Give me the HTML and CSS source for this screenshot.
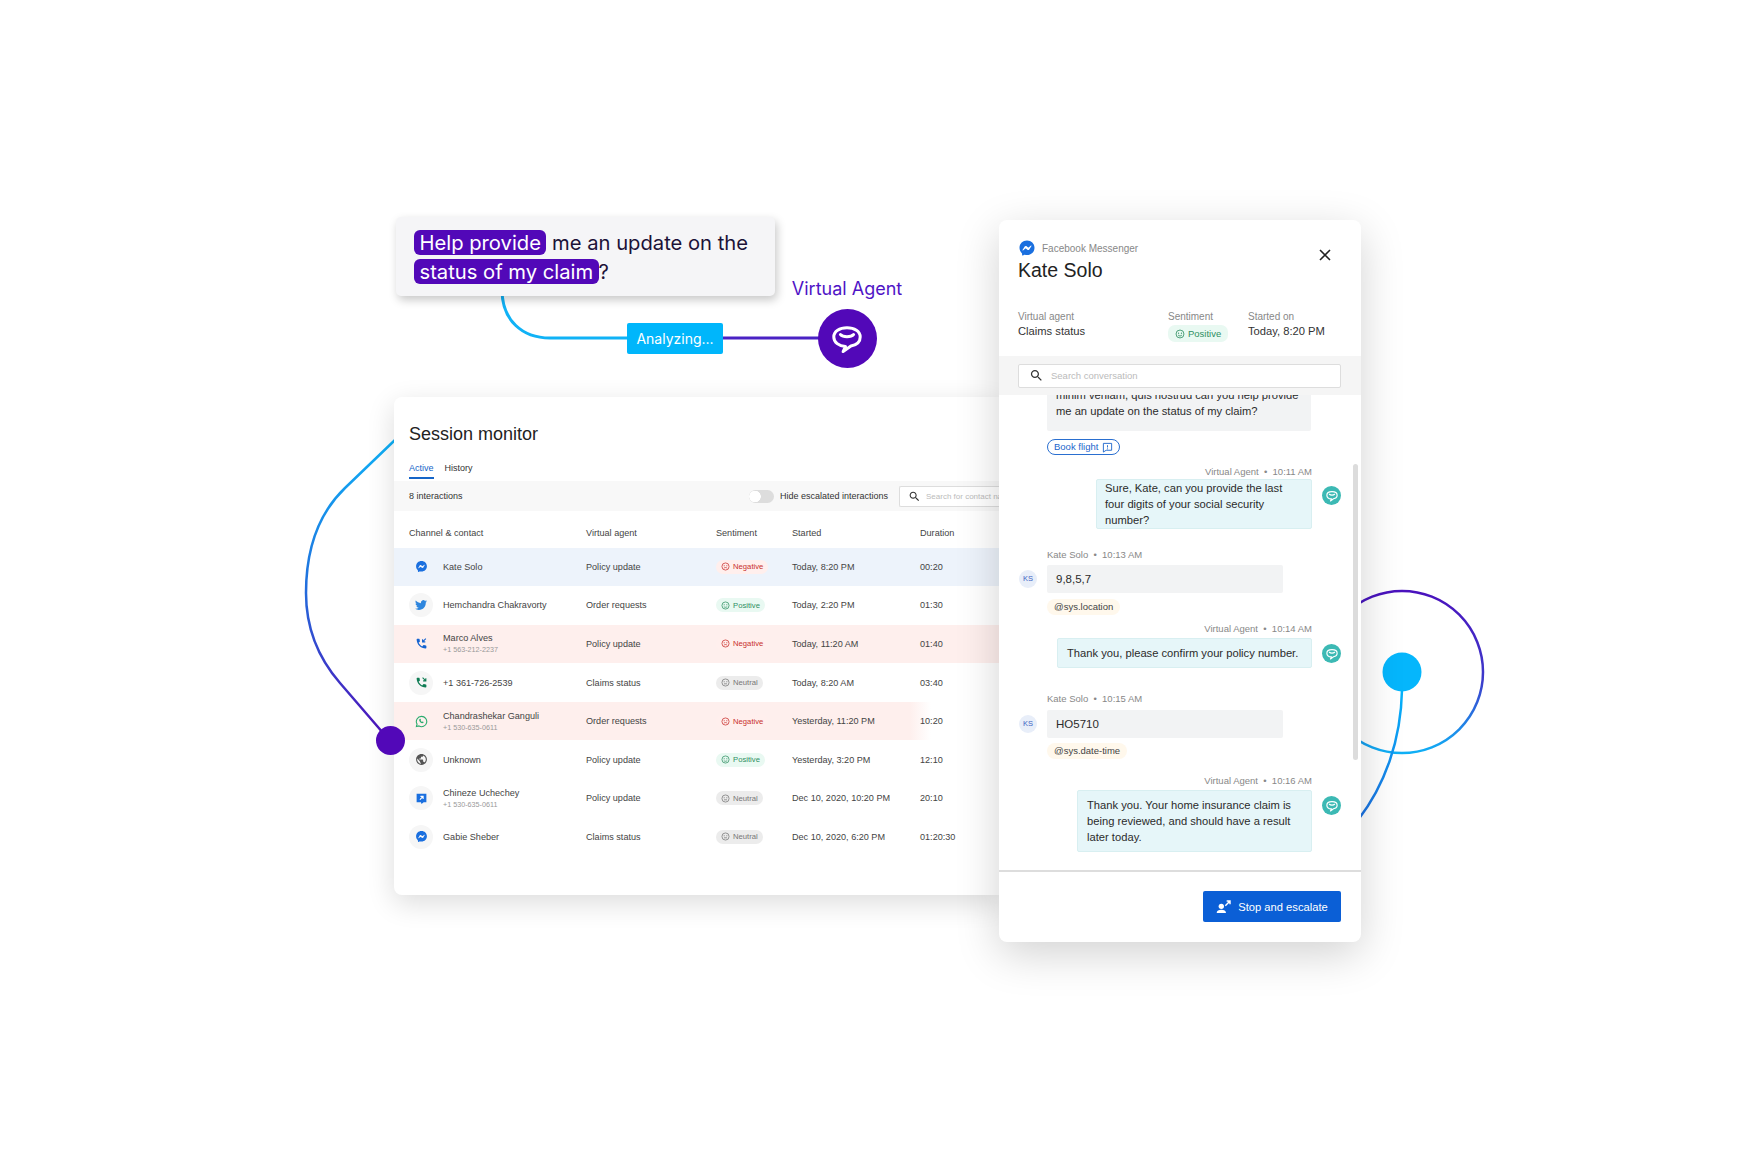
FILE: index.html
```html
<!DOCTYPE html>
<html>
  <head>
    <meta charset="utf-8">
    <title>Session monitor</title>
    <link rel="stylesheet" href="styles.css">
  </head>
  <body>
    <svg class="defs">
      <symbol id="bot" viewBox="0 0 24 24">
        <path d="M12 4.5C7 4.5 3.2 6.8 3.2 10.6c0 3.6 3.4 6.2 7.8 6.4l-1.6 3.4 5.2-3.7c3.9-.8 6.2-3.2 6.2-6.1 0-3.8-3.8-6.1-8.8-6.1z" fill="none" stroke="currentColor" stroke-width="2" stroke-linejoin="round"/>
        <path d="M7.6 9c1.7 1.9 7.1 1.9 8.8 0" fill="none" stroke="currentColor" stroke-width="2" stroke-linecap="round"/>
      </symbol>
      <symbol id="messenger" viewBox="0 0 24 24">
        <path fill="currentColor" d="M12 2C6.36 2 2 6.13 2 11.7c0 2.91 1.19 5.44 3.14 7.17.16.15.26.35.27.57l.05 1.78c.02.57.61.94 1.13.71l1.98-.87c.17-.08.36-.09.54-.05.91.25 1.87.38 2.89.38 5.64 0 10-4.13 10-9.7S17.64 2 12 2zm6 7.46-2.94 4.66c-.47.74-1.47.93-2.17.4l-2.34-1.75a.6.6 0 0 0-.72 0l-3.16 2.4c-.42.32-.97-.18-.69-.63l2.94-4.66c.47-.74 1.47-.93 2.17-.4l2.34 1.75c.22.16.51.16.72 0l3.16-2.4c.42-.32.97.18.69.63z"/>
      </symbol>
      <symbol id="twitter" viewBox="0 0 24 24">
        <path fill="currentColor" d="M23.953 4.57a10 10 0 01-2.825.775 4.958 4.958 0 002.163-2.723c-.951.555-2.005.959-3.127 1.184a4.92 4.92 0 00-8.384 4.482C7.69 8.095 4.067 6.13 1.64 3.162a4.822 4.822 0 00-.666 2.475c0 1.71.87 3.213 2.188 4.096a4.904 4.904 0 01-2.228-.616v.06a4.923 4.923 0 003.946 4.827 4.996 4.996 0 01-2.212.085 4.936 4.936 0 004.604 3.417 9.867 9.867 0 01-6.102 2.105c-.39 0-.779-.023-1.17-.067a13.995 13.995 0 007.557 2.209c9.053 0 13.998-7.496 13.998-13.985 0-.21 0-.42-.015-.63A9.935 9.935 0 0024 4.59z"/>
      </symbol>
      <symbol id="phone" viewBox="0 0 24 24">
        <path fill="currentColor" d="M20 15.5c-1.25 0-2.45-.2-3.57-.57-.35-.11-.74-.03-1.02.24l-2.2 2.2c-2.83-1.44-5.15-3.75-6.59-6.59l2.2-2.21c.28-.26.36-.65.25-1C8.7 6.45 8.5 5.25 8.5 4c0-.55-.45-1-1-1H4c-.55 0-1 .45-1 1 0 9.39 7.61 17 17 17 .55 0 1-.45 1-1v-3.5c0-.55-.45-1-1-1z"/>
      </symbol>
      <symbol id="search" viewBox="0 0 24 24">
        <path fill="currentColor" d="M15.5 14h-.79l-.28-.27C15.41 12.59 16 11.11 16 9.5 16 5.91 13.09 3 9.5 3S3 5.91 3 9.5 5.91 16 9.5 16c1.61 0 3.09-.59 4.23-1.57l.27.28v.79l5 4.99L20.49 19l-4.99-5zm-6 0C7.01 14 5 11.99 5 9.5S7.01 5 9.5 5 14 7.01 14 9.5 11.99 14 9.5 14z"/>
      </symbol>
      <symbol id="happy" viewBox="0 0 24 24">
        <circle cx="12" cy="12" r="9.5" fill="none" stroke="currentColor" stroke-width="2"/>
        <circle cx="8.5" cy="10" r="1.5" fill="currentColor"/>
        <circle cx="15.5" cy="10" r="1.5" fill="currentColor"/>
        <path d="M7.5 14.5c2 3 7 3 9 0" fill="none" stroke="currentColor" stroke-width="2"/>
      </symbol>
      <symbol id="sad" viewBox="0 0 24 24">
        <circle cx="12" cy="12" r="9.5" fill="none" stroke="currentColor" stroke-width="2"/>
        <circle cx="8.5" cy="10" r="1.5" fill="currentColor"/>
        <circle cx="15.5" cy="10" r="1.5" fill="currentColor"/>
        <path d="M7.5 17c2-3 7-3 9 0" fill="none" stroke="currentColor" stroke-width="2"/>
      </symbol>
      <symbol id="flat" viewBox="0 0 24 24">
        <circle cx="12" cy="12" r="9.5" fill="none" stroke="currentColor" stroke-width="2"/>
        <circle cx="8.5" cy="10" r="1.5" fill="currentColor"/>
        <circle cx="15.5" cy="10" r="1.5" fill="currentColor"/>
        <path d="M8 15.5h8" fill="none" stroke="currentColor" stroke-width="2"/>
      </symbol>
    </svg>

    <div class="stage">
      <svg class="wires" width="1740" height="1160" viewBox="0 0 1740 1160">
        <defs>
          <linearGradient id="leftwire" gradientUnits="userSpaceOnUse" x1="0" y1="441" x2="0" y2="741">
            <stop offset="0" stop-color="#0fb0f6"/>
            <stop offset=".45" stop-color="#1f74df"/>
            <stop offset="1" stop-color="#4f0db8"/>
          </linearGradient>
          <linearGradient id="ring" gradientUnits="userSpaceOnUse" x1="0" y1="591" x2="0" y2="753">
            <stop offset="0" stop-color="#4a12bd"/>
            <stop offset=".55" stop-color="#3d3acb"/>
            <stop offset="1" stop-color="#0fb0f6"/>
          </linearGradient>
          <linearGradient id="drop" gradientUnits="userSpaceOnUse" x1="0" y1="690" x2="0" y2="816">
            <stop offset="0" stop-color="#05b4fb"/>
            <stop offset="1" stop-color="#1c72e2"/>
          </linearGradient>
        </defs>
        <path d="M502 290C502 320 522 338 550 338H640" fill="none" stroke="#10b2f6" stroke-width="3"/>
        <path d="M720 338H830" fill="none" stroke="#4a22c4" stroke-width="3"/>
        <path d="M396 439L345 488C318 514 306 550 306 593C306 630 320 660 340 683L390 741" fill="none" stroke="url(#leftwire)" stroke-width="2.5"/>
        <circle cx="1402" cy="672" r="81" fill="none" stroke="url(#ring)" stroke-width="2.5"/>
        <path d="M1402 690C1401 740 1385 785 1358 820" fill="none" stroke="url(#drop)" stroke-width="2.5"/>
        <circle cx="1402" cy="672" r="19.5" fill="#05b6fc"/>
      </svg>

      <div class="utterance">
        <span class="hl">Help provide</span> me an update on the<br>
        <span class="hl">status of my claim</span>?
      </div>
      <div class="analyzing">Analyzing...</div>
      <div class="agent">
        <div class="agent-name">Virtual Agent</div>
        <div class="agent-dot"><svg width="36" height="36"><use href="#bot"/></svg></div>
      </div>

      <div class="monitor">
        <h1>Session monitor</h1>
        <div class="tabs">
          <div class="tab active">Active</div>
          <div class="tab">History</div>
        </div>
        <div class="toolbar">
          <span>8 interactions</span>
          <span class="toggle"></span>
          <span>Hide escalated interactions</span>
          <div class="mini-search">
            <svg width="13" height="13"><use href="#search"/></svg>
            <span>Search for contact name</span>
          </div>
        </div>
        <div class="row head">
          <div>Channel &amp; contact</div><div>Virtual agent</div><div>Sentiment</div><div>Started</div><div>Duration</div>
        </div>
        <div class="row blue">
          <div class="contact"><span class="ch"><svg class="c-fb" width="13" height="13"><use href="#messenger"/></svg></span><div>Kate Solo</div></div>
          <div>Policy update</div>
          <div><span class="pill neg"><svg width="9" height="9"><use href="#sad"/></svg>Negative</span></div>
          <div>Today, 8:20 PM</div><div>00:20</div>
        </div>
        <div class="row">
          <div class="contact"><span class="ch"><svg class="c-tw" width="12" height="12"><use href="#twitter"/></svg></span><div>Hemchandra Chakravorty</div></div>
          <div>Order requests</div>
          <div><span class="pill pos"><svg width="9" height="9"><use href="#happy"/></svg>Positive</span></div>
          <div>Today, 2:20 PM</div><div>01:30</div>
        </div>
        <div class="row pink">
          <div class="contact"><span class="ch"><svg class="c-blue" width="13" height="13" viewBox="0 0 24 24"><use href="#phone"/><path d="M20 3l-6 6M14 4v5h5" fill="none" stroke="currentColor" stroke-width="2"/></svg></span><div>Marco Alves<small>+1 563-212-2237</small></div></div>
          <div>Policy update</div>
          <div><span class="pill neg"><svg width="9" height="9"><use href="#sad"/></svg>Negative</span></div>
          <div>Today, 11:20 AM</div><div>01:40</div>
        </div>
        <div class="row">
          <div class="contact"><span class="ch"><svg class="c-green" width="13" height="13" viewBox="0 0 24 24"><use href="#phone"/><path d="M14 3l6 6M20 4v5h-5" fill="none" stroke="currentColor" stroke-width="2"/></svg></span><div>+1 361-726-2539</div></div>
          <div>Claims status</div>
          <div><span class="pill neu"><svg width="9" height="9"><use href="#flat"/></svg>Neutral</span></div>
          <div>Today, 8:20 AM</div><div>03:40</div>
        </div>
        <div class="row pink-short">
          <div class="contact"><span class="ch"><svg class="c-wa" width="13" height="13" viewBox="0 0 24 24"><path d="M12 2.5a9.5 9.5 0 0 0-8.2 14.3L2.6 21.4l4.8-1.2A9.5 9.5 0 1 0 12 2.5z" fill="none" stroke="currentColor" stroke-width="2"/><path d="M8.5 7.5c-1.5 1.500-.8 3.800 1.200 5.800s4.300 2.700 5.800 1.200l.5-1.500-2.200-1.200-1 .9c-1-.4-2.100-1.500-2.500-2.500l.9-1-1.200-2.200z" fill="currentColor"/></svg></span><div>Chandrashekar Ganguli<small>+1 530-635-0611</small></div></div>
          <div>Order requests</div>
          <div><span class="pill neg"><svg width="9" height="9"><use href="#sad"/></svg>Negative</span></div>
          <div>Yesterday, 11:20 PM</div><div>10:20</div>
        </div>
        <div class="row">
          <div class="contact"><span class="ch"><svg class="c-grey" width="13" height="13" viewBox="0 0 24 24"><path fill="currentColor" d="M12 2C6.48 2 2 6.48 2 12s4.48 10 10 10 10-4.48 10-10S17.52 2 12 2zm-1 17.93c-3.95-.49-7-3.85-7-7.93 0-.62.08-1.21.21-1.79L9 15v1c0 1.1.9 2 2 2v1.93zm6.9-2.54c-.26-.81-1-1.39-1.9-1.39h-1v-3c0-.55-.45-1-1-1H8v-2h2c.55 0 1-.45 1-1V7h2c1.1 0 2-.9 2-2v-.41c2.93 1.19 5 4.06 5 7.41 0 2.08-.8 3.97-2.1 5.39z"/></svg></span><div>Unknown</div></div>
          <div>Policy update</div>
          <div><span class="pill pos"><svg width="9" height="9"><use href="#happy"/></svg>Positive</span></div>
          <div>Yesterday, 3:20 PM</div><div>12:10</div>
        </div>
        <div class="row">
          <div class="contact"><span class="ch"><svg class="c-fb" width="13" height="13" viewBox="0 0 24 24"><path fill="currentColor" d="M3 3h18v16h-5l-4 3-1-3H3z"/><path d="M9 14l6-6M10 8h5v5" fill="none" stroke="#fff" stroke-width="2"/></svg></span><div>Chineze Uchechey<small>+1 530-635-0611</small></div></div>
          <div>Policy update</div>
          <div><span class="pill neu"><svg width="9" height="9"><use href="#flat"/></svg>Neutral</span></div>
          <div>Dec 10, 2020, 10:20 PM</div><div>20:10</div>
        </div>
        <div class="row">
          <div class="contact"><span class="ch"><svg class="c-fb" width="13" height="13"><use href="#messenger"/></svg></span><div>Gabie Sheber</div></div>
          <div>Claims status</div>
          <div><span class="pill neu"><svg width="9" height="9"><use href="#flat"/></svg>Neutral</span></div>
          <div>Dec 10, 2020, 6:20 PM</div><div>01:20:30</div>
        </div>
      </div>

      <div class="dot-purple"></div>

      <div class="panel">
        <div class="panel-head">
          <div>
            <div class="channel"><svg class="c-fb" width="18" height="18"><use href="#messenger"/></svg>Facebook Messenger</div>
            <div class="who">Kate Solo</div>
          </div>
          <svg class="close" width="14" height="14" viewBox="0 0 14 14"><path d="M2 2l10 10M12 2L2 12" fill="none" stroke="#222" stroke-width="1.6"/></svg>
        </div>
        <div class="meta">
          <div class="m-agent"><label>Virtual agent</label><div>Claims status</div></div>
          <div class="m-sent"><label>Sentiment</label><span class="pill pos big"><svg width="10" height="10"><use href="#happy"/></svg>Positive</span></div>
          <div><label>Started on</label><div>Today, 8:20 PM</div></div>
        </div>
        <div class="strip">
          <div class="search">
            <svg width="15" height="15"><use href="#search"/></svg>
            <span>Search conversation</span>
          </div>
        </div>
        <div class="chat">
          <div class="user">
            <div class="bubble grey first">minim veniam, quis nostrud can you help provide<br>me an update on the status of my claim?</div>
          </div>
          <div class="intent">Book flight <svg width="11" height="11" viewBox="0 0 24 24"><path d="M3 3h18v15H9l-6 4z" fill="none" stroke="currentColor" stroke-width="2"/><path d="M12 7v5M12 14v2" stroke="currentColor" stroke-width="2"/></svg></div>
          <div class="stamp right s1">Virtual Agent &nbsp;•&nbsp; 10:11 AM</div>
          <div class="bot">
            <div class="bubble teal b1">Sure, Kate, can you provide the last four digits of your social security number?</div>
            <span class="bot-ic"><svg width="14" height="14"><use href="#bot"/></svg></span>
          </div>
          <div class="stamp s2">Kate Solo &nbsp;•&nbsp; 10:13 AM</div>
          <div class="user">
            <span class="ks">KS</span>
            <div class="bubble grey short">9,8,5,7</div>
          </div>
          <div class="tag">@sys.location</div>
          <div class="stamp right s3">Virtual Agent &nbsp;•&nbsp; 10:14 AM</div>
          <div class="bot">
            <div class="bubble teal b2">Thank you, please confirm your policy number.</div>
            <span class="bot-ic"><svg width="14" height="14"><use href="#bot"/></svg></span>
          </div>
          <div class="stamp s4">Kate Solo &nbsp;•&nbsp; 10:15 AM</div>
          <div class="user">
            <span class="ks">KS</span>
            <div class="bubble grey short">HO5710</div>
          </div>
          <div class="tag t2">@sys.date-time</div>
          <div class="stamp right s5">Virtual Agent &nbsp;•&nbsp; 10:16 AM</div>
          <div class="bot">
            <div class="bubble teal b3">Thank you. Your home insurance claim is being reviewed, and should have a result later today.</div>
            <span class="bot-ic"><svg width="14" height="14"><use href="#bot"/></svg></span>
          </div>
          <div class="scrollbar"></div>
        </div>
        <div class="foot">
          <div class="escalate">
            <svg width="16" height="16" viewBox="0 0 24 24"><circle cx="8" cy="11" r="4" fill="#fff"/><path d="M1 21c0-4 3-5 7-5s7 1 7 5z" fill="#fff"/><path d="M14 10l7-7M16 3h5v5" fill="none" stroke="#fff" stroke-width="2.2"/></svg>
            Stop and escalate
          </div>
        </div>
      </div>
    </div>
  </body>
</html>
```

FILE: styles.css
```css
*{
  box-sizing: border-box;
}
html,body{
  margin: 0;
  background: #fff;
}
body{
  font-family: "Liberation Sans", Arial, sans-serif;
  color: #333;
}
.defs{
  display: none;
}
.stage{
  position: relative;
  width: 1740px;
  height: 1160px;
  overflow: hidden;
}
.wires{
  position: absolute;
  left: 0;
  top: 0;
}

/* top part */
.utterance{
  position: absolute;
  left: 396px;
  top: 217px;
  width: 379px;
  height: 79px;
  padding: 11px 18px 0;
  border-radius: 5px;
  background: #f5f5f7;
  box-shadow: 2px 4px 10px rgba(0,0,0,.22);
  font-family: Inter, sans-serif;
  font-size: 20.2px;
  line-height: 29px;
  color: #1c1238;
}
.hl{
  display: inline-block;
  line-height: 25px;
  padding: 0 5.5px;
  border-radius: 6px;
  background: #5208b8;
  color: #fff;
}
.analyzing{
  position: absolute;
  left: 627px;
  top: 323px;
  width: 96px;
  height: 31px;
  border-radius: 2px;
  background: #00b6fb;
  color: #fff;
  font-family: Inter, sans-serif;
  font-size: 14px;
  line-height: 31px;
  text-align: center;
}
.agent{
  position: absolute;
  left: 777px;
  top: 277px;
  width: 140px;
  display: flex;
  flex-direction: column;
  align-items: center;
  gap: 8px;
}
.agent-name{
  font-family: Inter, sans-serif;
  font-size: 18px;
  line-height: 24px;
  color: #4f14c6;
}
.agent-dot{
  width: 59px;
  height: 59px;
  border-radius: 50%;
  background: #5208b8;
  color: #fff;
  display: flex;
  align-items: center;
  justify-content: center;
}
.dot-purple{
  position: absolute;
  left: 376px;
  top: 726px;
  width: 29px;
  height: 29px;
  border-radius: 50%;
  background: #5208b8;
}

/* session monitor */
.monitor{
  position: absolute;
  left: 394px;
  top: 397px;
  width: 606px;
  height: 498px;
  overflow: hidden;
  border-radius: 8px 0 0 8px;
  background: #fff;
  box-shadow: 0 8px 28px rgba(0,0,0,.14);
}
.monitor h1{
  margin: 26px 0 0 15px;
  font-size: 18px;
  font-weight: normal;
  line-height: 22px;
  color: #222;
}
.tabs{
  display: flex;
  gap: 11px;
  margin: 14px 0 0 15px;
  font-size: 9px;
}
.tab{
  height: 20px;
  padding-top: 3.5px;
}
.tab.active{
  color: #1565c8;
  border-bottom: 2px solid #1565c8;
}
.toolbar{
  display: flex;
  align-items: center;
  height: 30px;
  margin-top: 2px;
  padding-left: 15px;
  background: #f8f8f8;
  font-size: 9px;
}
.toggle{
  width: 25px;
  height: 13px;
  margin: 0 6px 0 auto;
  border-radius: 7px;
  background: #ddd radial-gradient(circle at 6px 6.5px, #fff 5.5px, transparent 6px);
}
.mini-search{
  display: flex;
  align-items: center;
  gap: 5px;
  flex: none;
  width: 101px;
  height: 21px;
  margin-left: 11px;
  padding-left: 8px;
  overflow: hidden;
  white-space: nowrap;
  border: 1px solid #ddd;
  border-right: 0;
  border-radius: 2px 0 0 2px;
  background: #fff;
  font-size: 8px;
  color: #bbb;
}
.mini-search svg{
  color: #333;
  flex: none;
}
.row{
  display: grid;
  grid-template-columns: 177px 130px 76px 128px 1fr;
  align-items: center;
  height: 38.6px;
  padding-left: 15px;
  font-size: 9.1px;
  color: #444;
}
.row.head{
  height: 28.5px;
  margin-top: 8px;
}
.row.blue{
  background: #edf3fb;
}
.row.pink{
  background: #feefed;
}
.row.pink-short{
  background: linear-gradient(90deg, #feefed 96%, transparent);
  margin-right: 69px;
}
.contact{
  display: flex;
  align-items: center;
  gap: 10px;
}
.contact small{
  display: block;
  margin-top: 2px;
  font-size: 7.2px;
  color: #999;
}
.ch{
  display: flex;
  align-items: center;
  justify-content: center;
  width: 24px;
  height: 24px;
  border-radius: 50%;
  background: #f6f6f6;
}
.blue .ch,.pink .ch,.pink-short .ch{
  background: transparent;
}
.c-fb{ color: #1a6fdf; }
.c-tw{ color: #2e86de; }
.c-blue{ color: #1463d0; }
.c-green{ color: #0f7c54; }
.c-wa{ color: #2bab6e; }
.c-grey{ color: #555; }
.pill{
  display: inline-flex;
  align-items: center;
  gap: 3px;
  height: 14px;
  padding: 0 5px;
  border-radius: 7px;
  font-size: 7.7px;
}
.neg{
  background: #ffefed;
  color: #c9302c;
}
.pos{
  background: #e9f9f2;
  color: #2f8f62;
}
.neu{
  background: #ececec;
  color: #777;
}

/* right panel */
.panel{
  position: absolute;
  left: 999px;
  top: 220px;
  width: 362px;
  height: 722px;
  display: flex;
  flex-direction: column;
  border-radius: 8px;
  background: #fff;
  box-shadow: 0 12px 44px rgba(0,0,0,.18);
}
.panel-head{
  display: flex;
  justify-content: space-between;
  padding: 20px 29px 0 19px;
}
.channel{
  display: flex;
  align-items: center;
  gap: 6px;
  height: 16px;
  font-size: 10px;
  color: #888;
}
.who{
  margin-top: 2px;
  font-size: 19.5px;
  line-height: 24px;
  color: #222;
}
.close{
  margin-top: 8px;
}
.meta{
  display: flex;
  padding: 27px 0 0 19px;
  font-size: 11.2px;
  line-height: 15px;
  color: #333;
}
.meta label{
  display: block;
  font-size: 10px;
  color: #888;
}
.m-agent{ width: 150px; }
.m-sent{ width: 80px; }
.pill.big{
  height: 17px;
  font-size: 9.5px;
  padding: 0 7px;
  margin-top: 1px;
}
.strip{
  margin-top: 13px;
  padding: 8px 20px 8px 19px;
  background: #f5f5f5;
  height: 39px;
}
.search{
  display: flex;
  align-items: center;
  gap: 7px;
  height: 24px;
  padding-left: 10px;
  border: 1px solid #ddd;
  border-radius: 2px;
  background: #fff;
  font-size: 9.5px;
  color: #bbb;
}
.search svg{
  color: #333;
}
.chat{
  position: relative;
  flex: 1;
  min-height: 0;
  overflow: hidden;
  display: flex;
  flex-direction: column;
  justify-content: flex-end;
  padding: 0 20px 18px;
  border-bottom: 2px solid #ddd;
  font-size: 11.2px;
  line-height: 16px;
  color: #2b2b2b;
}
.user{
  display: flex;
  align-items: center;
  gap: 10px;
  flex: none;
}
.bot{
  display: flex;
  justify-content: flex-end;
  align-items: flex-start;
  gap: 10px;
  flex: none;
}
.bubble{
  border-radius: 2px;
  padding: 6px 9px;
}
.grey{
  background: #f2f3f4;
}
.first{
  width: 264px;
  margin-left: 28px;
  padding-bottom: 12px;
  white-space: nowrap;
}
.short{
  width: 236px;
  font-size: 11.5px;
}
.teal{
  background: #e6f6f9;
  border: 1px solid #d8eff1;
}
.b1{ width: 216px; padding: 0 14px 0 8px; }
.b1 + .bot-ic{ margin-top: 7px; }
.b2{ width: 255px; }
.b3{ width: 235px; }
.bot-ic{
  display: flex;
  align-items: center;
  justify-content: center;
  flex: none;
  width: 19px;
  height: 19px;
  margin-top: 6px;
  border-radius: 50%;
  background: #3cb9b4;
  color: #fff;
}
.ks{
  display: flex;
  align-items: center;
  justify-content: center;
  width: 18px;
  height: 18px;
  border-radius: 50%;
  background: #e8eef9;
  font-size: 7.5px;
  color: #3f66c4;
}
.stamp{
  flex: none;
  padding-left: 28px;
  font-size: 9.5px;
  line-height: 14px;
  color: #888;
}
.stamp.right{
  text-align: right;
  padding: 0 29px 0 0;
}
.s1{ margin-top: 10px; }
.s2{ margin-top: 19px; margin-bottom: 3px; }
.s3{ margin-top: 7px; margin-bottom: 2px; }
.s4{ margin-top: 24px; margin-bottom: 4px; }
.s5{ margin-top: 15px; margin-bottom: 2px; }
.intent{
  flex: none;
  display: inline-flex;
  align-items: center;
  align-self: flex-start;
  gap: 4px;
  height: 16px;
  margin: 8px 0 0 28px;
  padding: 0 6px;
  border: 1px solid #2a6fd0;
  border-radius: 8px;
  font-size: 9.5px;
  color: #1c66cc;
}
.tag{
  flex: none;
  align-self: flex-start;
  height: 16px;
  margin: 6px 0 0 28px;
  padding: 0 7px;
  border-radius: 8px;
  background: #fff8ec;
  font-size: 9.5px;
  line-height: 16px;
  color: #444;
}
.t2{
  margin-top: 5px;
}
.scrollbar{
  position: absolute;
  right: 3px;
  top: 69px;
  width: 5px;
  height: 296px;
  border-radius: 3px;
  background: #dcdcdc;
}
.foot{
  display: flex;
  justify-content: flex-end;
  flex: none;
  height: 70px;
  padding: 19px 20px 0 0;
}
.escalate{
  display: flex;
  align-items: center;
  justify-content: center;
  gap: 6px;
  width: 138px;
  height: 31px;
  border-radius: 2px;
  background: #0b5fd6;
  color: #fff;
  font-size: 11.2px;
}
```
